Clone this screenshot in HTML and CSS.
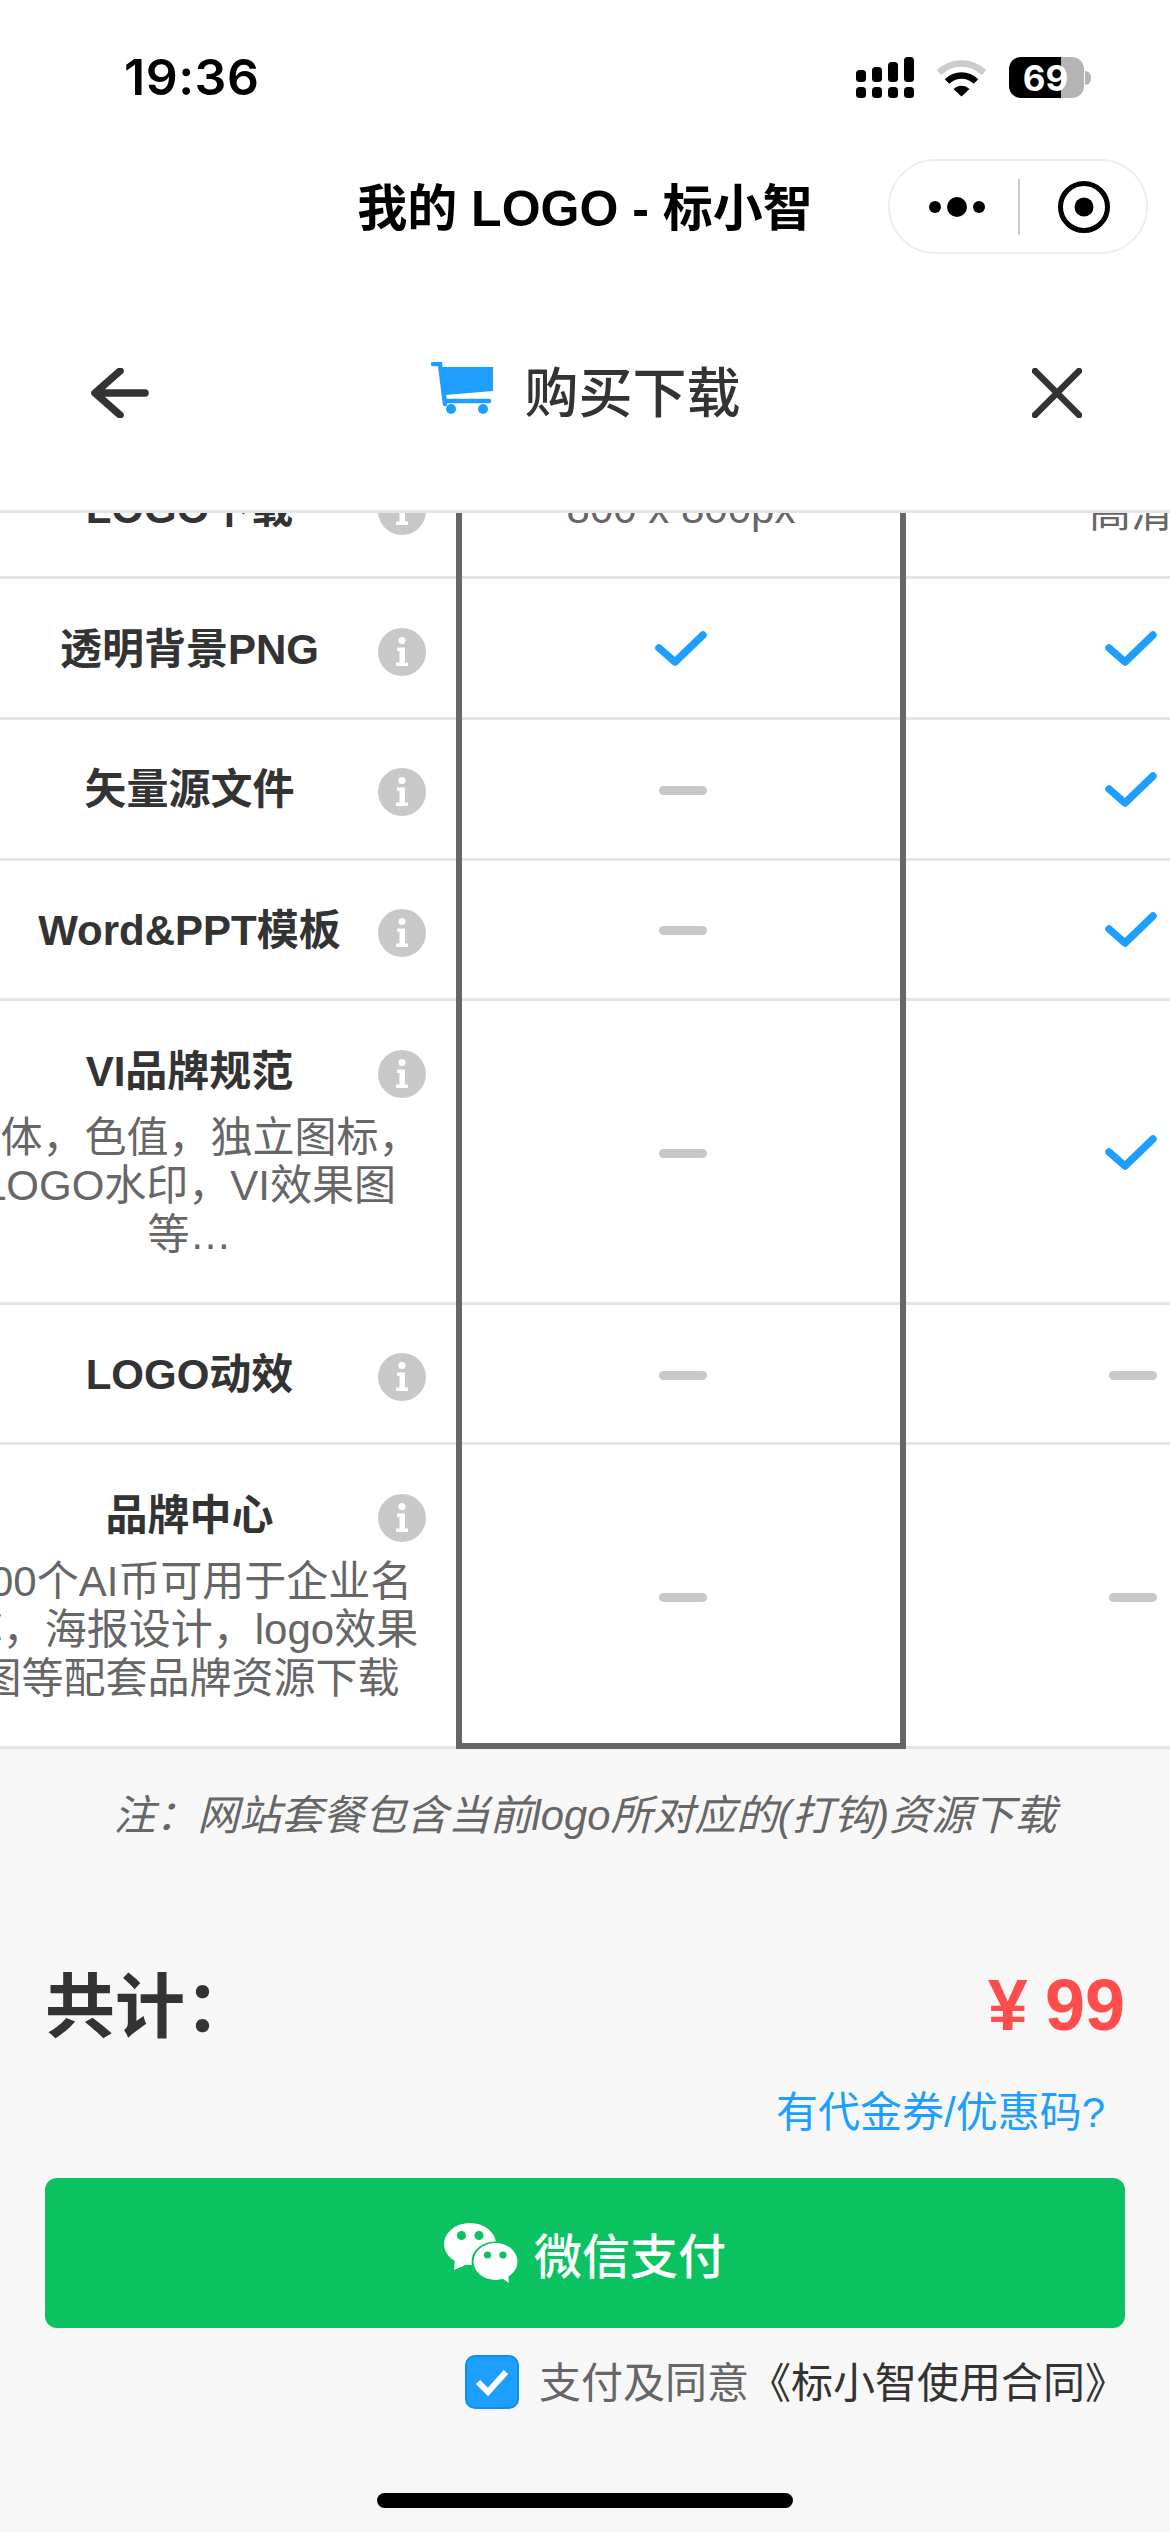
FILE: index.html
```html
<!DOCTYPE html>
<html lang="zh-CN">
<head>
    <meta charset="UTF-8">
    <meta name="viewport" content="width=device-width, initial-scale=1.0">
    <title>我的LOGO - 标小智</title>
    <link rel="stylesheet" href="styles.css">
</head>
<body>
    <svg class="defs" width="0" height="0">
        <symbol id="info" viewBox="0 0 48 48">
            <circle cx="24" cy="24" r="24" fill="#c8c8c8"/>
            <circle cx="24" cy="12.5" r="3.6" fill="#fff"/>
            <path d="M19 19.5h8v15h3v3.5H18v-3.5h3.5V23H19z" fill="#fff"/>
        </symbol>
        <symbol id="check" viewBox="0 0 54 36">
            <path d="M5 18L21 32L49 5" fill="none" stroke="#1e9fff" stroke-width="7.5" stroke-linecap="round" stroke-linejoin="round"/>
        </symbol>
    </svg>

    <div class="status-bar">
        <span class="time">19:36</span>
        <div class="status-icons">
            <svg width="58" height="41" viewBox="0 0 58 41">
                <g fill="#000">
                    <rect x="0" y="13" width="10" height="12" rx="3.5"/>
                    <rect x="16" y="10" width="10" height="15" rx="3.5"/>
                    <rect x="32" y="5" width="10" height="20" rx="3.5"/>
                    <rect x="48" y="0" width="10" height="25" rx="3.5"/>
                    <rect x="0" y="30" width="10" height="11" rx="3.5"/>
                    <rect x="16" y="30" width="10" height="11" rx="3.5"/>
                    <rect x="32" y="30" width="10" height="11" rx="3.5"/>
                    <rect x="48" y="30" width="10" height="11" rx="3.5"/>
                </g>
            </svg>
            <svg class="wifi" width="51" height="38" viewBox="0 0 51 38">
                <path d="M3 13.5C16 1.5 35 1.5 48 13.5" fill="none" stroke="#cbcbcb" stroke-width="6.5"/>
                <path d="M11 22.5C19.5 14.5 31.5 14.5 40 22.5" fill="none" stroke="#000" stroke-width="6.5"/>
                <path d="M17.5 30C22 25.5 29 25.5 33.5 30L25.5 37.5z" fill="#000"/>
            </svg>
            <div class="battery">
                <div class="battery-body"><span class="battery-text">69</span></div>
                <div class="battery-nub"></div>
            </div>
        </div>
    </div>

    <div class="nav-bar">
        <span></span>
        <h1 class="nav-title">我的 LOGO - 标小智</h1>
        <div class="capsule">
            <div class="capsule-dots"><i></i><b></b><i></i></div>
            <div class="capsule-line"></div>
            <svg width="52" height="52" viewBox="0 0 52 52">
                <circle cx="26" cy="26" r="23.5" fill="none" stroke="#000" stroke-width="5"/>
                <circle cx="26" cy="26" r="9.5" fill="#000"/>
            </svg>
        </div>
    </div>

    <div class="buy-head">
        <svg class="head-icon" width="58" height="50" viewBox="0 0 58 50">
            <path d="M29 3L4 25L29 47M5 25H54" fill="none" stroke="#333" stroke-width="7.5" stroke-linecap="round" stroke-linejoin="round"/>
        </svg>
        <div class="buy-title">
            <svg class="cart" width="62" height="52" viewBox="0 0 62 52">
                <path d="M2 2H9L14 42" fill="none" stroke="#1e9fff" stroke-width="4.5" stroke-linecap="round"/>
                <path d="M11 5H62V29L14 33z" fill="#1e9fff"/>
                <path d="M15 39H58" fill="none" stroke="#1e9fff" stroke-width="4.5" stroke-linecap="round"/>
                <circle cx="20" cy="47" r="5" fill="#1e9fff"/>
                <circle cx="52" cy="47" r="5" fill="#1e9fff"/>
            </svg>
            <span>购买下载</span>
        </div>
        <svg class="head-icon" width="50" height="50" viewBox="0 0 50 50">
            <path d="M3 3L47 47M47 3L3 47" fill="none" stroke="#333" stroke-width="6.5" stroke-linecap="round"/>
        </svg>
    </div>

    <div class="table-wrap">
        <div class="table">
            <div class="row">
                <div class="cell-name"><div class="name">LOGO下载<svg class="info"><use href="#info"/></svg></div></div>
                <div class="cell cell-text">800 x 800px</div>
                <div class="cell cell-text">高清</div>
            </div>
            <div class="row">
                <div class="cell-name"><div class="name">透明背景PNG<svg class="info"><use href="#info"/></svg></div></div>
                <div class="cell"><svg class="check"><use href="#check"/></svg></div>
                <div class="cell"><svg class="check"><use href="#check"/></svg></div>
            </div>
            <div class="row">
                <div class="cell-name"><div class="name">矢量源文件<svg class="info"><use href="#info"/></svg></div></div>
                <div class="cell"><div class="dash"></div></div>
                <div class="cell"><svg class="check"><use href="#check"/></svg></div>
            </div>
            <div class="row">
                <div class="cell-name"><div class="name">Word&amp;PPT模板<svg class="info"><use href="#info"/></svg></div></div>
                <div class="cell"><div class="dash"></div></div>
                <div class="cell"><svg class="check"><use href="#check"/></svg></div>
            </div>
            <div class="row row-tall">
                <div class="cell-name">
                    <div class="name">VI品牌规范<svg class="info"><use href="#info"/></svg></div>
                    <p class="desc">字体，色值，独立图标，<br>LOGO水印，VI效果图<br>等…</p>
                </div>
                <div class="cell"><div class="dash"></div></div>
                <div class="cell"><svg class="check"><use href="#check"/></svg></div>
            </div>
            <div class="row">
                <div class="cell-name"><div class="name">LOGO动效<svg class="info"><use href="#info"/></svg></div></div>
                <div class="cell"><div class="dash"></div></div>
                <div class="cell"><div class="dash"></div></div>
            </div>
            <div class="row row-tall">
                <div class="cell-name">
                    <div class="name">品牌中心<svg class="info"><use href="#info"/></svg></div>
                    <p class="desc">500个AI币可用于企业名<br>称，海报设计，logo效果<br>图等配套品牌资源下载</p>
                </div>
                <div class="cell"><div class="dash"></div></div>
                <div class="cell"><div class="dash"></div></div>
            </div>
        </div>
        <div class="col-highlight"></div>
    </div>

    <div class="pay-panel">
        <p class="note">注：网站套餐包含当前logo所对应的(打钩)资源下载</p>
        <div class="total">
            <span class="total-label">共计：</span>
            <span class="total-price">¥ 99</span>
        </div>
        <div class="coupon">有代金券/优惠码?</div>
        <button class="pay-btn">
            <svg width="74" height="60" viewBox="0 0 74 60">
                <ellipse cx="26" cy="21" rx="26" ry="21" fill="#fff"/>
                <path d="M11 35L10 47L24 41z" fill="#fff"/>
                <ellipse cx="51.5" cy="38.5" rx="22.5" ry="18.5" fill="#fff" stroke="#0ac360" stroke-width="3"/>
                <ellipse cx="51.5" cy="38.5" rx="22" ry="18.5" fill="#fff"/>
                <path d="M56 54L65 60L64 50z" fill="#fff"/>
                <circle cx="17.5" cy="12.5" r="4.5" fill="#0ac360"/>
                <circle cx="35" cy="12.5" r="4.5" fill="#0ac360"/>
                <circle cx="43.5" cy="32" r="3.6" fill="#0ac360"/>
                <circle cx="59" cy="32" r="3.6" fill="#0ac360"/>
            </svg>
            <span>微信支付</span>
        </button>
        <div class="agree">
            <div class="agree-box">
                <svg width="36" height="30" viewBox="0 0 36 30">
                    <path d="M4 15L14 25L32 5" fill="none" stroke="#fff" stroke-width="6"/>
                </svg>
            </div>
            <span class="agree-text">支付及同意<em>《标小智使用合同》</em></span>
        </div>
        <div class="home-bar"></div>
    </div>
</body>
</html>
```

FILE: styles.css
```css
* {
    box-sizing: border-box;
}

body {
    margin: 0;
    width: 1170px;
    height: 2532px;
    overflow: hidden;
    display: flex;
    flex-direction: column;
    background-color: #fff;
    color: #333;
    font-family: "Liberation Sans", "Noto Sans CJK SC", sans-serif;
}

.defs {
    position: absolute;
}

/* status bar */
.status-bar {
    height: 159px;
    flex: none;
    display: flex;
    justify-content: space-between;
    padding: 57px 79px 0 124px;
    color: #000;
}

.time {
    font-family: Inter, sans-serif;
    font-size: 50px;
    font-weight: 600;
    line-height: 41px;
    letter-spacing: 0.5px;
}

.status-icons {
    display: flex;
    align-items: flex-start;
}

.wifi {
    margin: 2px 22px 0;
}

.battery {
    display: flex;
    align-items: center;
}

.battery-body {
    width: 75px;
    height: 41px;
    border-radius: 12px;
    background: linear-gradient(to right, #000 52px, #b4b4b4 52px);
    display: flex;
    align-items: center;
    justify-content: center;
}

.battery-text {
    color: #fff;
    font-family: Inter, sans-serif;
    font-size: 35px;
    font-weight: 700;
    padding-right: 2px;
}

.battery-nub {
    width: 6px;
    height: 14px;
    margin-left: 1px;
    background-color: #b4b4b4;
    border-radius: 0 7px 7px 0;
}

/* wechat nav */
.nav-bar {
    height: 95px;
    flex: none;
    display: grid;
    grid-template-columns: 1fr auto 1fr;
    align-items: center;
}

.nav-title {
    margin: -6px 0 0;
    color: #000;
    font-size: 50px;
    font-weight: 700;
    white-space: nowrap;
}

.capsule {
    justify-self: end;
    width: 260px;
    height: 95px;
    margin-right: 22px;
    border: 2px solid #eee;
    border-radius: 48px;
    display: flex;
    align-items: center;
    padding-left: 39px;
}

.capsule-dots {
    width: 56px;
    display: flex;
    align-items: center;
    justify-content: space-between;
}

.capsule-dots i {
    width: 12px;
    height: 12px;
    border-radius: 50%;
    background-color: #000;
}

.capsule-dots b {
    width: 20px;
    height: 20px;
    border-radius: 50%;
    background-color: #000;
}

.capsule-line {
    width: 2px;
    height: 56px;
    margin: 0 38px 0 33px;
    background-color: #ccc;
}

/* head */
.buy-head {
    height: 259px;
    flex: none;
    padding: 19px 88px 3px 91px;
    display: flex;
    align-items: center;
    justify-content: space-between;
    border-bottom: 3px solid #e5e5e5;
}

.head-icon {
    margin-top: 5px;
}

.buy-title {
    display: flex;
    align-items: center;
    gap: 30px;
    font-size: 54px;
    font-weight: 500;
    margin-left: -8px;
    margin-bottom: 2px;
}

.cart {
    margin: 0 2px 2px -2px;
}

/* table */
.table-wrap {
    position: relative;
    height: 1236px;
    flex: none;
    overflow: hidden;
}

.table {
    width: 1428px;
    margin: -74.5px 0 0 -72px;
}

.row {
    display: grid;
    grid-template-columns: 528px 450px 450px;
    height: 140.7px;
    border-bottom: 3px solid #e5e5e5;
}

.row-tall {
    height: 303.5px;
}

.cell-name {
    padding: 3px 5px 0 0;
    display: flex;
    flex-direction: column;
    justify-content: center;
    text-align: center;
}

.name {
    position: relative;
    font-size: 42px;
    font-weight: 700;
    line-height: 50px;
}

.info {
    position: absolute;
    right: 25px;
    top: 50%;
    width: 48px;
    height: 48px;
    margin-top: -22px;
}

.desc {
    margin: 17px 0 0;
    color: #666;
    font-size: 42px;
    line-height: 48.5px;
    white-space: nowrap;
}

.cell {
    display: flex;
    align-items: center;
    justify-content: center;
}

.cell-text {
    color: #666;
    font-size: 42px;
    padding-top: 3px;
}

.check {
    width: 54px;
    height: 36px;
}

.dash {
    width: 48px;
    height: 9px;
    margin: 3px 0 0 4px;
    border-radius: 5px;
    background-color: #c8c8c8;
}

.col-highlight {
    position: absolute;
    left: 456px;
    top: 0;
    bottom: 0;
    width: 450px;
    border: 6px solid #666;
    border-top: none;
    pointer-events: none;
}

/* pay panel */
.pay-panel {
    flex: 1;
    background-color: #f7f7f7;
    padding: 37px 45px 0;
    display: flex;
    flex-direction: column;
}

.note {
    margin: 0;
    color: #666;
    font-size: 41.8px;
    font-style: italic;
    line-height: 60px;
    text-align: center;
}

.total {
    margin-top: 119px;
    height: 80px;
    display: flex;
    align-items: center;
    justify-content: space-between;
}

.total-label {
    font-size: 70px;
    font-weight: 700;
    margin-bottom: 8px;
}

.total-price {
    color: #ff4d4d;
    font-size: 72px;
    font-weight: 700;
    word-spacing: -3px;
}

.coupon {
    margin-top: 38px;
    padding-right: 20px;
    color: #1e9fff;
    font-size: 42px;
    line-height: 60px;
    text-align: right;
}

.pay-btn {
    margin-top: 35px;
    height: 150px;
    flex: none;
    border: none;
    border-radius: 12px;
    background-color: #0ac360;
    color: #fff;
    font-family: inherit;
    font-size: 48px;
    font-weight: 500;
    display: flex;
    align-items: center;
    justify-content: center;
    gap: 16px;
}

.agree {
    margin: 24px -2px 0 0;
    height: 60px;
    display: flex;
    align-items: center;
    justify-content: flex-end;
    gap: 20px;
    color: #666;
    font-size: 42px;
}

.agree-text {
    margin-bottom: 5px;
}

.agree em {
    color: #333;
    font-style: normal;
}

.agree-box {
    width: 54px;
    height: 54px;
    border: 2px solid #108ee9;
    border-radius: 10px;
    background-color: #1e9fff;
    display: flex;
    align-items: center;
    justify-content: center;
}

.home-bar {
    align-self: center;
    width: 416px;
    height: 15px;
    margin-top: 81px;
    border-radius: 8px;
    background-color: #000;
}
```
